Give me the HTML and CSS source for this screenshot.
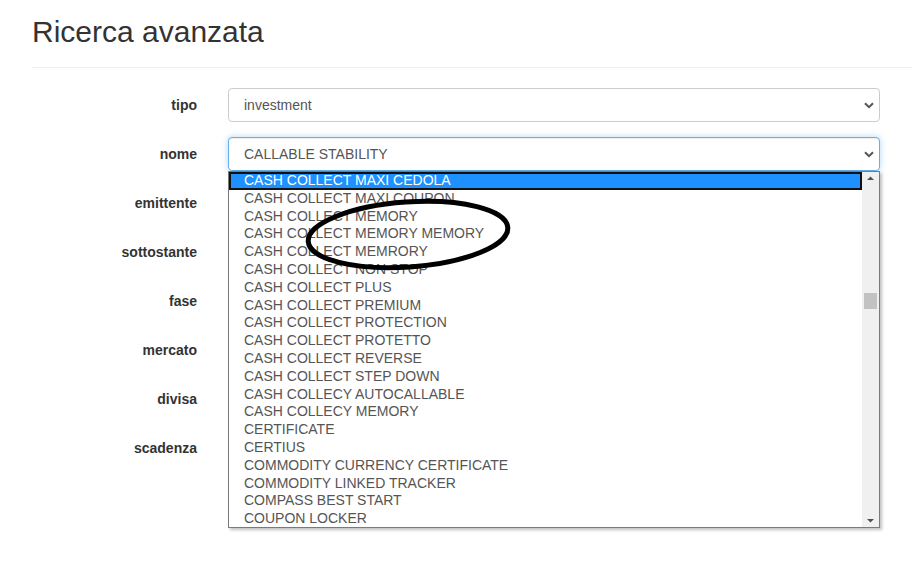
FILE: index.html
```html
<!DOCTYPE html>
<html lang="it">
<head>
<meta charset="utf-8">
<title>Ricerca avanzata</title>
<link rel="stylesheet" href="styles.css">
</head>
<body>
<div class="header"><h2 class="title">Ricerca avanzata</h2></div>
<div class="form">
  <div class="row"><div class="label">tipo</div><div class="select">investment<svg class="chev" width="10" height="7" viewBox="0 0 10 7"><path d="M1 1.2 L5 5.2 L9 1.2" fill="none" stroke="#555" stroke-width="2"/></svg></div></div>
  <div class="row"><div class="label">nome</div><div class="select focus">CALLABLE STABILITY<svg class="chev" width="10" height="7" viewBox="0 0 10 7"><path d="M1 1.2 L5 5.2 L9 1.2" fill="none" stroke="#555" stroke-width="2"/></svg></div></div>
  <div class="row"><div class="label">emittente</div><div class="select"></div></div>
  <div class="row"><div class="label">sottostante</div><div class="select"></div></div>
  <div class="row"><div class="label">fase</div><div class="select"></div></div>
  <div class="row"><div class="label">mercato</div><div class="select"></div></div>
  <div class="row"><div class="label">divisa</div><div class="select"></div></div>
  <div class="row"><div class="label">scadenza</div><div class="select"></div></div>
</div>

<div class="dropdown">
  <ul class="options">
    <li class="sel">CASH COLLECT MAXI CEDOLA</li>
    <li>CASH COLLECT MAXI COUPON</li>
    <li>CASH COLLECT MEMORY</li>
    <li>CASH COLLECT MEMORY MEMORY</li>
    <li>CASH COLLECT MEMRORY</li>
    <li>CASH COLLECT NON STOP</li>
    <li>CASH COLLECT PLUS</li>
    <li>CASH COLLECT PREMIUM</li>
    <li>CASH COLLECT PROTECTION</li>
    <li>CASH COLLECT PROTETTO</li>
    <li>CASH COLLECT REVERSE</li>
    <li>CASH COLLECT STEP DOWN</li>
    <li>CASH COLLECY AUTOCALLABLE</li>
    <li>CASH COLLECY MEMORY</li>
    <li>CERTIFICATE</li>
    <li>CERTIUS</li>
    <li>COMMODITY CURRENCY CERTIFICATE</li>
    <li>COMMODITY LINKED TRACKER</li>
    <li>COMPASS BEST START</li>
    <li>COUPON LOCKER</li>
  </ul>
  <div class="scrollbar">
    <svg class="arrow" width="17" height="12" viewBox="0 0 17 12"><path d="M5 8 L12 8 L8.5 4.5 Z" fill="#505050"/></svg>
    <div class="track"><div class="thumb"></div></div>
    <svg class="arrow" width="17" height="12" viewBox="0 0 17 12"><path d="M5 4 L12 4 L8.5 7.5 Z" fill="#505050"/></svg>
  </div>
</div>

<svg class="circle" width="912" height="564" viewBox="0 0 912 564">
  <ellipse cx="408" cy="234.5" rx="100" ry="32.5" transform="rotate(-4 408 234.5)" fill="none" stroke="#000" stroke-width="5"/>
</svg>
</body>
</html>
```

FILE: styles.css
```css
html, body {
  margin: 0;
  padding: 0;
  background: #fff;
}
body {
  font-family: "Liberation Sans", Arial, sans-serif;
  font-size: 14px;
  color: #333;
  width: 912px;
  height: 564px;
  overflow: hidden;
  position: relative;
}
.header {
  margin: 0 0 20px 32px;
  padding: 15px 0 19px 0;
  border-bottom: 1px solid #eee;
}
.title {
  margin: 0;
  font-size: 30px;
  font-weight: normal;
  line-height: 33px;
  color: #333;
}
.form {
  display: flex;
  flex-direction: column;
  gap: 15px;
}
.row {
  display: flex;
  align-items: center;
  gap: 31px;
  height: 34px;
}
.label {
  width: 197px;
  text-align: right;
  font-weight: bold;
  color: #333;
  line-height: 34px;
}
.select {
  box-sizing: border-box;
  width: 652px;
  height: 34px;
  border: 1px solid #ccc;
  border-radius: 4px;
  padding-left: 15px;
  line-height: 32px;
  color: #555;
  position: relative;
  background: #fff;
}
.select .chev {
  position: absolute;
  right: 5px;
  top: 13px;
}
.select.focus {
  border-color: #66afe9;
  box-shadow: inset 0 1px 1px rgba(0,0,0,.075), 0 0 6px rgba(102,175,233,.5);
}
.dropdown {
  position: absolute;
  left: 228px;
  top: 171px;
  width: 652px;
  height: 357px;
  box-sizing: border-box;
  border: 1px solid #7a7a7a;
  background: #fff;
  box-shadow: 2px 2px 3px rgba(0,0,0,.25);
  display: flex;
}
.options {
  list-style: none;
  margin: 0;
  padding: 0;
  flex: 1;
  overflow: hidden;
}
.options li {
  height: 17.8px;
  line-height: 17.8px;
  padding-left: 15px;
  color: #555;
  white-space: nowrap;
  box-sizing: border-box;
}
.options li.sel {
  background: #1e90ff;
  color: #fff;
  border: 2px solid #111;
  padding-left: 13px;
  line-height: 13.8px;
}
.scrollbar {
  width: 17px;
  background: #f0f0f0;
  display: flex;
  flex-direction: column;
}
.arrow {
  display: block;
  flex: none;
}
.track {
  flex: 1;
  position: relative;
}
.thumb {
  position: absolute;
  left: 2px;
  right: 2px;
  top: 109px;
  height: 16px;
  background: #c2c2c2;
}
.circle {
  position: absolute;
  left: 0;
  top: 0;
  pointer-events: none;
}
```
